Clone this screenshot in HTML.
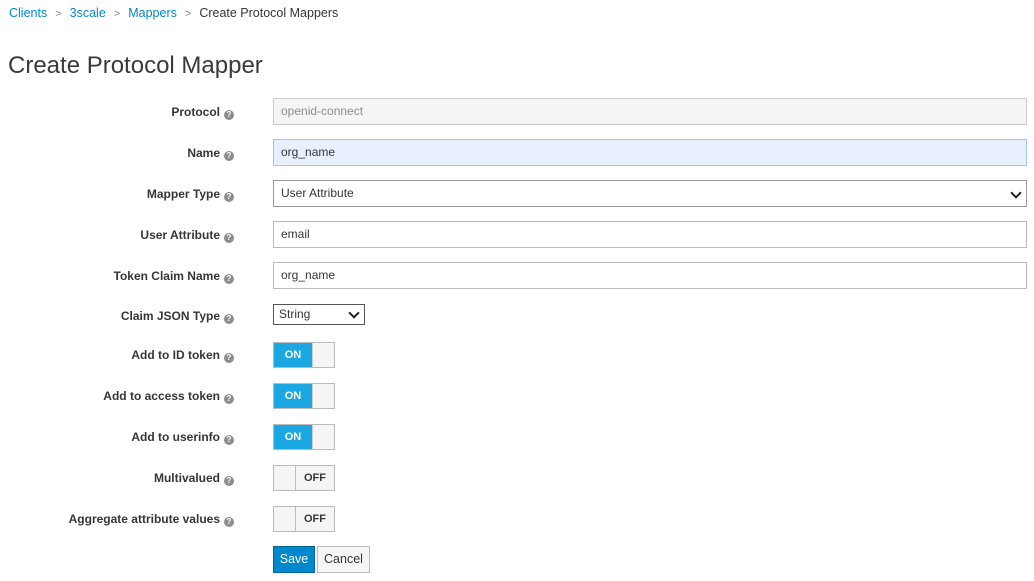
<!DOCTYPE html><html><head><style>
body{margin:0;width:1034px;height:581px;background:#fff;font-family:"Liberation Sans",sans-serif;color:#363636;position:relative;overflow:hidden}
.bc{position:absolute;left:9px;top:6px;font-size:12.5px;color:#363636}
.bc a{color:#0088ce;text-decoration:none}
.bc .s{color:#8b8d8f;margin:0 8px;font-size:11px}
h1{position:absolute;left:8px;top:52px;margin:0;font-size:24px;font-weight:normal;color:#3a3a3a}
.l{position:absolute;right:800px;font-size:12px;font-weight:bold;text-align:right;white-space:nowrap}
.q{display:inline-block;width:10px;height:10px;border-radius:50%;background:#8b8d8f;color:#fff;font-size:8px;line-height:10px;text-align:center;margin-left:4px;vertical-align:-1px}
.i{position:absolute;left:273px;height:25px;border:1px solid #bbb;font-size:12px;line-height:25px;padding-left:7px;width:745px}
.t{position:absolute;left:273px;width:60px;height:24px;border:1px solid #bbb;font-size:11px;font-weight:bold}
.on{position:absolute;left:0;top:0;width:38px;height:24px;background:#1ba7e1;color:#fff;text-align:center;line-height:24px}
.on+.r{position:absolute;right:0;top:0;width:21px;height:24px;background:#f5f5f5;border-left:1px solid #ccc}
.off{position:absolute;right:0;top:0;width:38px;height:24px;border-left:1px solid #bbb;text-align:center;line-height:24px;background:#f5f5f5}
.chev{position:absolute;right:6px;top:8px;width:6px;height:6px;border-right:2px solid #222;border-bottom:2px solid #222;transform:rotate(45deg)}
</style></head><body>
<div class="bc"><a>Clients</a><span class="s">&gt;</span><a>3scale</a><span class="s">&gt;</span><a>Mappers</a><span class="s">&gt;</span>Create Protocol Mappers</div>
<h1>Create Protocol Mapper</h1>
<div class="l" style="top:105px">Protocol<span class="q">?</span></div>
<div class="i" style="top:98px;background:#f5f5f5;color:#8b8d8f;border-color:#ccc">openid-connect</div>
<div class="l" style="top:146px">Name<span class="q">?</span></div>
<div class="i" style="top:139px;background:#e8f0fe;border-color:#a9c4e6">org_name</div>
<div class="l" style="top:187px">Mapper Type<span class="q">?</span></div>
<div class="i" style="top:180px;border-color:#999">User Attribute<span class="chev"></span></div>
<div class="l" style="top:228px">User Attribute<span class="q">?</span></div>
<div class="i" style="top:221px">email</div>
<div class="l" style="top:269px">Token Claim Name<span class="q">?</span></div>
<div class="i" style="top:262px">org_name</div>
<div class="l" style="top:309px">Claim JSON Type<span class="q">?</span></div>
<div class="i" style="top:304px;width:85px;height:19px;line-height:19px;padding-left:5px;border-color:#555">String<span class="chev" style="top:4px;right:6px"></span></div>
<div class="l" style="top:348px">Add to ID token<span class="q">?</span></div>
<div class="t" style="top:342px"><div class="on">ON</div><div class="r"></div></div>
<div class="l" style="top:389px">Add to access token<span class="q">?</span></div>
<div class="t" style="top:383px"><div class="on">ON</div><div class="r"></div></div>
<div class="l" style="top:430px">Add to userinfo<span class="q">?</span></div>
<div class="t" style="top:424px"><div class="on">ON</div><div class="r"></div></div>
<div class="l" style="top:471px">Multivalued<span class="q">?</span></div>
<div class="t" style="top:465px;background:#f5f5f5"><div class="off">OFF</div></div>
<div class="l" style="top:512px">Aggregate attribute values<span class="q">?</span></div>
<div class="t" style="top:506px;background:#f5f5f5"><div class="off">OFF</div></div>
<div style="position:absolute;left:273px;top:546px;width:40px;height:25px;background:#0088ce;border:1px solid #00659c;color:#fff;font-size:12.5px;line-height:25px;text-align:center">Save</div>
<div style="position:absolute;left:317px;top:546px;width:51px;height:25px;background:#f5f5f5;border:1px solid #bbb;font-size:12.5px;line-height:25px;text-align:center">Cancel</div>
</body></html>
